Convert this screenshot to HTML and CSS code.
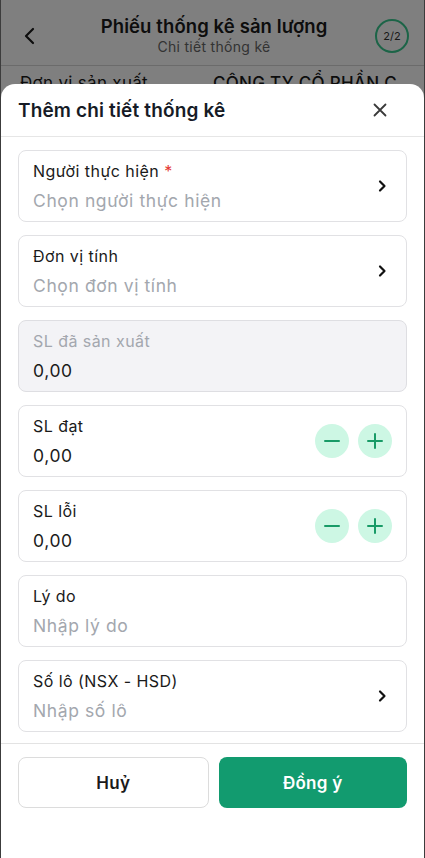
FILE: index.html
```html
<!DOCTYPE html>
<html lang="vi">
<head>
	<meta charset="UTF-8">
	<title>Thêm chi tiết thống kê</title>
	<link rel="stylesheet" href="styles.css">
</head>
<body>
	<div class="screen">
		<div class="topbar">
			<span class="back">
				<svg width="14" height="18" viewBox="0 0 14 18"><path d="M10 2 L3 9 L10 16" fill="none" stroke="#1a1a1a" stroke-width="2.2" stroke-linecap="round" stroke-linejoin="round"/></svg>
			</span>
			<div class="topbar-title">
				<div class="title">Phiếu thống kê sản lượng</div>
				<div class="subtitle">Chi tiết thống kê</div>
			</div>
			<span class="step">2/2</span>
		</div>
		<div class="info-row">
			<span class="info-label">Đơn vị sản xuất</span>
			<span class="info-value">CÔNG TY CỔ PHẦN C</span>
		</div>

		<div class="overlay"></div>

		<div class="sheet">
			<div class="sheet-head">
				<span class="sheet-title">Thêm chi tiết thống kê</span>
				<span class="close">
					<svg width="14" height="14" viewBox="0 0 14 14"><path d="M1.5 1.5 L12.5 12.5 M12.5 1.5 L1.5 12.5" stroke="#3a3a3a" stroke-width="1.8" stroke-linecap="round"/></svg>
				</span>
			</div>

			<div class="sheet-body">
				<div class="field">
					<div class="field-text">
						<div class="label">Người thực hiện <span class="req">*</span></div>
						<div class="value placeholder">Chọn người thực hiện</div>
					</div>
					<svg class="chev" width="10" height="14" viewBox="0 0 10 14"><path d="M3 2.5 L7.5 7 L3 11.5" fill="none" stroke="#111" stroke-width="2.2" stroke-linecap="round" stroke-linejoin="round"/></svg>
				</div>

				<div class="field">
					<div class="field-text">
						<div class="label">Đơn vị tính</div>
						<div class="value placeholder">Chọn đơn vị tính</div>
					</div>
					<svg class="chev" width="10" height="14" viewBox="0 0 10 14"><path d="M3 2.5 L7.5 7 L3 11.5" fill="none" stroke="#111" stroke-width="2.2" stroke-linecap="round" stroke-linejoin="round"/></svg>
				</div>

				<div class="field disabled">
					<div class="field-text">
						<div class="label">SL đã sản xuất</div>
						<div class="value">0,00</div>
					</div>
				</div>

				<div class="field">
					<div class="field-text">
						<div class="label">SL đạt</div>
						<div class="value">0,00</div>
					</div>
					<div class="stepper">
						<span class="round-btn"><svg width="16" height="16" viewBox="0 0 16 16"><path d="M1 8 H15" stroke="#189b67" stroke-width="2" stroke-linecap="round"/></svg></span>
						<span class="round-btn"><svg width="16" height="16" viewBox="0 0 16 16"><path d="M1 8 H15 M8 1 V15" stroke="#189b67" stroke-width="2" stroke-linecap="round"/></svg></span>
					</div>
				</div>

				<div class="field">
					<div class="field-text">
						<div class="label">SL lỗi</div>
						<div class="value">0,00</div>
					</div>
					<div class="stepper">
						<span class="round-btn"><svg width="16" height="16" viewBox="0 0 16 16"><path d="M1 8 H15" stroke="#189b67" stroke-width="2" stroke-linecap="round"/></svg></span>
						<span class="round-btn"><svg width="16" height="16" viewBox="0 0 16 16"><path d="M1 8 H15 M8 1 V15" stroke="#189b67" stroke-width="2" stroke-linecap="round"/></svg></span>
					</div>
				</div>

				<div class="field">
					<div class="field-text">
						<div class="label">Lý do</div>
						<div class="value placeholder">Nhập lý do</div>
					</div>
				</div>

				<div class="field">
					<div class="field-text">
						<div class="label">Số lô (NSX - HSD)</div>
						<div class="value placeholder">Nhập số lô</div>
					</div>
					<svg class="chev" width="10" height="14" viewBox="0 0 10 14"><path d="M3 2.5 L7.5 7 L3 11.5" fill="none" stroke="#111" stroke-width="2.2" stroke-linecap="round" stroke-linejoin="round"/></svg>
				</div>
			</div>

			<div class="sheet-foot">
				<button class="btn btn-cancel">Huỷ</button>
				<button class="btn btn-ok">Đồng ý</button>
			</div>
		</div>
	</div>
</body>
</html>
```

FILE: styles.css
```css
*{
	margin: 0;
	padding: 0;
	box-sizing: border-box;
}
body{
	font-family: Inter, "Noto Sans", sans-serif;
	color: #1a1a1a;
	background: #fff;
}
.screen{
	width: 425px;
	height: 858px;
	position: relative;
	overflow: hidden;
	border-left: 1px solid #3c3c3c;
	border-right: 1px solid #3c3c3c;
}
.topbar{
	height: 66px;
	display: flex;
	align-items: center;
	padding: 4px 14px 0 22px;
	border-bottom: 1px solid #d6d6d6;
}
.back{
	width: 20px;
	display: flex;
	align-items: center;
	margin-top: 2px;
}
.topbar-title{
	flex: 1;
	text-align: center;
	margin-left: 10px;
}
.title{
	font-size: 18.5px;
	font-weight: 600;
	line-height: 24px;
	letter-spacing: 0.1px;
}
.subtitle{
	font-size: 14px;
	color: #666;
	line-height: 18px;
	letter-spacing: 0.3px;
}
.step{
	width: 34px;
	height: 34px;
	border: 2px solid #38c98f;
	border-radius: 50%;
	display: flex;
	align-items: center;
	justify-content: center;
	font-size: 11px;
	color: #333;
	margin: 2px 1px 0 0;
}
.info-row{
	display: flex;
	padding: 6px 19px;
	font-size: 17px;
	line-height: 22px;
	letter-spacing: 0.3px;
}
.info-label{
	width: 193px;
}
.info-value{
	font-weight: 500;
}
.overlay{
	position: absolute;
	top: 0;
	left: 0;
	right: 0;
	bottom: 0;
	background: rgba(0,0,0,0.5);
}
.sheet{
	position: absolute;
	top: 84px;
	left: 0;
	right: 0;
	bottom: 0;
	background: #fff;
	border-radius: 14px 14px 0 0;
	display: flex;
	flex-direction: column;
}
.sheet-head{
	height: 53px;
	display: flex;
	align-items: center;
	justify-content: space-between;
	padding: 0 18px 0 17px;
	border-bottom: 1px solid #e6e6e6;
}
.sheet-title{
	font-size: 19px;
	font-weight: 600;
	letter-spacing: 0.15px;
	color: #161b26;
}
.close{
	display: flex;
	width: 14px;
	margin-right: 19px;
}
.sheet-body{
	padding: 13px 17px 11px;
	display: flex;
	flex-direction: column;
	gap: 13px;
}
.field{
	height: 72px;
	border: 1px solid #e1e1e4;
	border-radius: 8px;
	display: flex;
	align-items: center;
	padding: 0 14px 0 14px;
}
.field-text{
	flex: 1;
	padding-top: 2px;
}
.label{
	font-size: 16px;
	line-height: 20px;
	letter-spacing: 0.45px;
	color: #1a1a1a;
}
.req{
	color: #e53935;
}
.value{
	font-size: 17.5px;
	line-height: 24px;
	margin-top: 8px;
	letter-spacing: 0.6px;
	color: #1a1a1a;
}
.placeholder{
	color: #a3a7ae;
}
.disabled{
	background: #f3f3f6;
	border-color: #dedee2;
}
.disabled .label{
	color: #a3a7ae;
}
.chev{
	margin-right: 5px;
}
.stepper{
	display: flex;
	gap: 9px;
}
.round-btn{
	width: 34px;
	height: 34px;
	border-radius: 50%;
	background: #cdf7e4;
	display: flex;
	align-items: center;
	justify-content: center;
}
.sheet-foot{
	border-top: 1px solid #e3e3e3;
	padding: 13px 17px;
	display: flex;
	gap: 10px;
}
.btn{
	flex: 1;
	height: 51px;
	border-radius: 8px;
	font-family: Inter, "Noto Sans", sans-serif;
	font-size: 17px;
	font-weight: 600;
	letter-spacing: 0.3px;
}
.btn-cancel{
	background: #fff;
	border: 1px solid #dcdcdc;
	color: #1a1a1a;
}
.btn-ok{
	background: #129b6f;
	border: none;
	color: #fff;
}
```
